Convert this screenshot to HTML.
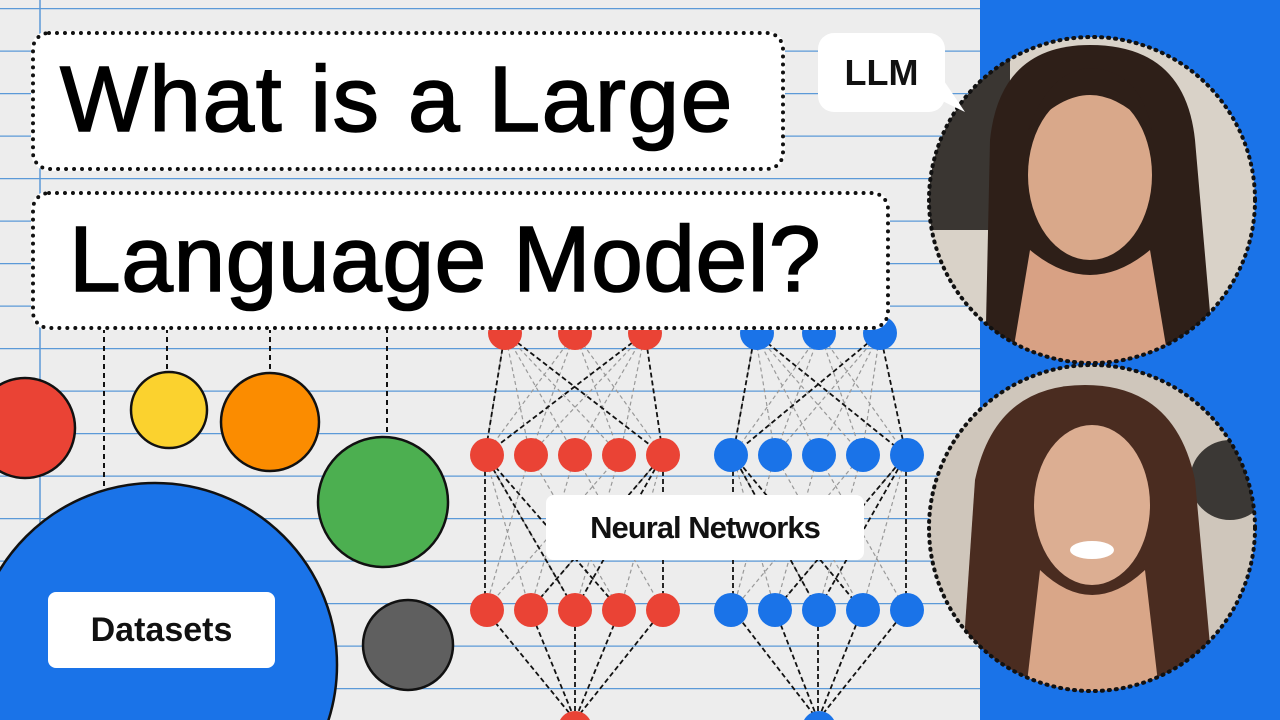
<!DOCTYPE html>
<html><head><meta charset="utf-8"><style>
html,body{margin:0;padding:0;width:1280px;height:720px;overflow:hidden;background:#ececec;font-family:"Liberation Sans",sans-serif;position:relative}
.box{position:absolute;background:#fff;border:4px dotted #111;border-radius:18px;box-sizing:border-box;color:#000}
.lbl{position:absolute;background:#fff;border-radius:8px;font-weight:bold;color:#111;text-align:center}
.t{position:absolute;font-size:93px;line-height:100px;font-weight:normal;-webkit-text-stroke:1.6px #000;white-space:nowrap}
</style></head><body>
<svg width="1280" height="720" style="position:absolute;left:0;top:0;display:block">
<defs>
<pattern id="lines" width="1280" height="42.5" patternUnits="userSpaceOnUse" y="8">
<rect width="1280" height="42.5" fill="#ededed"/><line x1="0" y1="0.5" x2="1280" y2="0.5" stroke="#5c9ad8" stroke-width="1.5"/></pattern>
<clipPath id="c1"><circle cx="1092" cy="200" r="163"/></clipPath>
<clipPath id="c2"><circle cx="1092" cy="528" r="163"/></clipPath>
<clipPath id="all"><rect width="1280" height="720"/></clipPath>
</defs>
<g clip-path="url(#all)">
<rect width="980" height="720" fill="url(#lines)"/>
<line x1="40" y1="0" x2="40" y2="720" stroke="#5c9ad8" stroke-width="1.5"/>
<rect x="980" y="0" width="300" height="720" fill="#1a73e8"/>
<g stroke="#111" stroke-width="2" stroke-dasharray="5,4">
<line x1="104" y1="328" x2="104" y2="490"/><line x1="167" y1="328" x2="167" y2="372"/><line x1="270" y1="328" x2="270" y2="372"/><line x1="387" y1="328" x2="387" y2="437"/>
</g>
<g stroke="#111" stroke-width="2.5">
<circle cx="25" cy="428" r="50" fill="#ea4335"/>
<circle cx="169" cy="410" r="38" fill="#fbd22e"/>
<circle cx="270" cy="422" r="49" fill="#fb8c00"/>
<circle cx="383" cy="502" r="65" fill="#4caf50"/>
<circle cx="408" cy="645" r="45" fill="#5f5f5f"/>
<circle cx="155" cy="665" r="182" fill="#1a73e8"/>
</g>
<g stroke="#999" stroke-width="1.2" stroke-dasharray="4,3">
<path d="M505 333L485 455M505 333L530 455M505 333L575 455M505 333L620 455M575 333L485 455M575 333L530 455M575 333L620 455M575 333L663 455M645 333L530 455M645 333L575 455M645 333L620 455M485 455L530 610M485 455L575 610M530 455L485 610M530 455L620 610M575 455L530 610M575 455L663 610M620 455L485 610M620 455L575 610M663 455L530 610M663 455L620 610"/>
<path d="M755 333L733 455M755 333L775 455M755 333L818 455M755 333L862 455M820 333L733 455M820 333L775 455M820 333L862 455M820 333L906 455M880 333L775 455M880 333L818 455M880 333L862 455M733 455L775 610M733 455L818 610M775 455L733 610M775 455L862 610M818 455L775 610M818 455L906 610M862 455L733 610M862 455L818 610M906 455L775 610M906 455L862 610"/>
</g>
<g stroke="#111" stroke-width="1.8" stroke-dasharray="5,3">
<path d="M505 333L485 455M505 333L663 455M645 333L485 455M645 333L663 455M485 455L485 610M485 455L620 610M663 455L530 610M663 455L663 610M485 455L575 610M663 455L575 610M485 610L575 720M530 610L575 720M575 610L575 720M620 610L575 720M663 610L575 720"/>
<path d="M755 333L733 455M755 333L906 455M880 333L733 455M880 333L906 455M733 455L733 610M733 455L862 610M906 455L775 610M906 455L906 610M733 455L818 610M906 455L818 610M733 610L818 720M775 610L818 720M818 610L818 720M862 610L818 720M906 610L818 720"/>
</g>
<g fill="#ea4335"><circle cx="505" cy="333" r="17"/><circle cx="575" cy="333" r="17"/><circle cx="645" cy="333" r="17"/>
<circle cx="487" cy="455" r="17"/><circle cx="531" cy="455" r="17"/><circle cx="575" cy="455" r="17"/><circle cx="619" cy="455" r="17"/><circle cx="663" cy="455" r="17"/>
<circle cx="487" cy="610" r="17"/><circle cx="531" cy="610" r="17"/><circle cx="575" cy="610" r="17"/><circle cx="619" cy="610" r="17"/><circle cx="663" cy="610" r="17"/><circle cx="575" cy="728" r="17"/></g>
<g fill="#1a73e8"><circle cx="757" cy="333" r="17"/><circle cx="819" cy="333" r="17"/><circle cx="880" cy="333" r="17"/>
<circle cx="731" cy="455" r="17"/><circle cx="775" cy="455" r="17"/><circle cx="819" cy="455" r="17"/><circle cx="863" cy="455" r="17"/><circle cx="907" cy="455" r="17"/>
<circle cx="731" cy="610" r="17"/><circle cx="775" cy="610" r="17"/><circle cx="819" cy="610" r="17"/><circle cx="863" cy="610" r="17"/><circle cx="907" cy="610" r="17"/><circle cx="819" cy="728" r="17"/></g>
<g clip-path="url(#c1)">
<rect x="920" y="30" width="350" height="340" fill="#d9d2c8"/>
<rect x="920" y="30" width="90" height="200" fill="#3a3632"/>
<path d="M985 370 L990 140 Q1000 45 1090 45 Q1185 45 1195 140 L1215 370Z" fill="#2e1f18"/>
<ellipse cx="1090" cy="175" rx="62" ry="85" fill="#d9a88a"/>
<path d="M1030 250 Q1090 300 1150 250 L1170 370 L1010 370Z" fill="#d8a184"/>
<path d="M1028 130 Q1050 70 1090 68 Q1140 70 1152 130 Q1120 95 1090 95 Q1060 95 1028 130Z" fill="#2e1f18"/>
</g>
<circle cx="1092" cy="200" r="163" fill="none" stroke="#111" stroke-width="4" stroke-dasharray="1,6" stroke-linecap="round"/>
<g clip-path="url(#c2)">
<rect x="920" y="360" width="350" height="340" fill="#cfc6bb"/>
<circle cx="1230" cy="480" r="40" fill="#3b3835"/>
<path d="M960 700 L975 480 Q995 385 1085 385 Q1175 385 1195 480 L1215 700Z" fill="#4a2c20"/>
<ellipse cx="1092" cy="505" rx="58" ry="80" fill="#dcae92"/>
<path d="M1040 570 Q1092 620 1145 570 L1160 700 L1025 700Z" fill="#d9a688"/>
<ellipse cx="1092" cy="550" rx="22" ry="9" fill="#fff"/>
</g>
<circle cx="1092" cy="528" r="163" fill="none" stroke="#111" stroke-width="4" stroke-dasharray="1,6" stroke-linecap="round"/>
<path d="M930 95 L965 112 L940 75Z" fill="#fff"/>
</g>
</svg>
<div class="box" style="left:31px;top:31px;width:754px;height:140px"><div class="t" style="left:25px;top:14px;letter-spacing:1.5px">What is a Large</div></div>
<div class="box" style="left:31px;top:191px;width:859px;height:139px"><div class="t" style="left:34px;top:14px;letter-spacing:0.5px">Language Model?</div></div>
<div class="lbl" style="left:818px;top:33px;width:127px;height:79px;border-radius:16px;font-size:36px;line-height:79px">LLM</div>
<div class="lbl" style="left:546px;top:495px;width:318px;height:65px;font-size:31px;line-height:65px;letter-spacing:-1px">Neural Networks</div>
<div class="lbl" style="left:48px;top:592px;width:227px;height:76px;font-size:34px;line-height:76px">Datasets</div>
</body></html>
